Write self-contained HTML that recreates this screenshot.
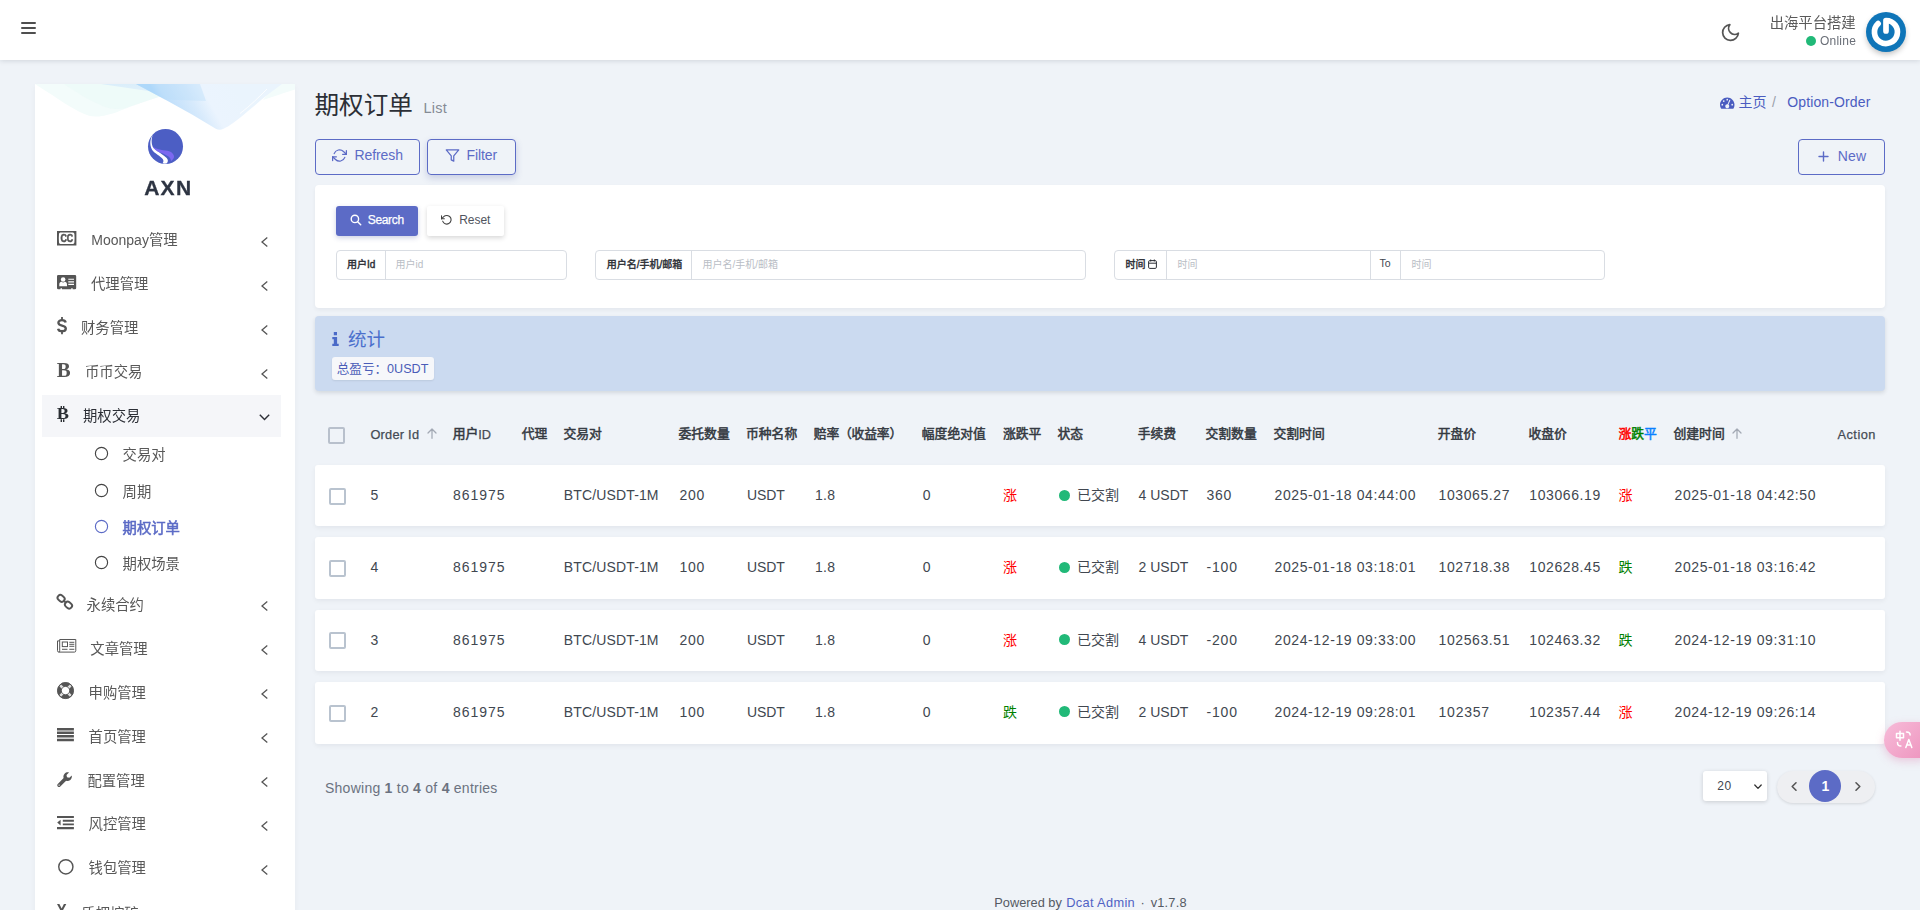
<!DOCTYPE html>
<html lang="zh-CN">
<head>
<meta charset="utf-8">
<title>期权订单</title>
<style>
*{box-sizing:border-box;margin:0;padding:0}
html,body{width:1920px;height:910px;overflow:hidden}
body{background:#eff3f8;font-family:"Liberation Sans","Noto Sans CJK SC",sans-serif;font-size:14px;color:#414750;position:relative}
.abs{position:absolute;white-space:nowrap}
a{text-decoration:none;color:inherit}
#nav{will-change:transform;position:absolute;left:0;top:0;width:1920px;height:60px;background:#fff;box-shadow:0 1px 5px rgba(0,21,41,.13)}
#side{will-change:transform;position:absolute;left:35px;top:84px;width:260px;height:830px;background:#fff;box-shadow:0 2px 6px rgba(0,21,41,.04);overflow:hidden}
.mi{position:absolute;left:0;width:260px;height:44px}
.mi .t{position:absolute;top:.4px;line-height:44px;font-size:14.350px;color:#585858;white-space:nowrap}
.mi svg.ic{position:absolute}
.mi .ar{position:absolute;left:225px;top:16px}
#title{left:314.500px;top:87.900px;font-size:24.600px;line-height:36px;color:#2c2f36}
.btn-o{position:absolute;border:1px solid #5c6bc6;border-radius:3px;color:#5c6bc6;font-size:14px}
.btn-o span{position:absolute;white-space:nowrap;line-height:20px}
.card{position:absolute;background:#fff;border-radius:4px;box-shadow:0 2px 4px rgba(0,21,41,.05)}
.ig{position:absolute;top:250px;height:30px;border:1px solid #d9dde3;border-radius:4px;background:#fff}
.ig .lb{position:absolute;top:0;left:0;height:28px;border-right:1px solid #d9dde3;font-size:10px;-webkit-text-stroke-width:.4px;color:#2c2f36;line-height:28px;white-space:nowrap}
.ig .ph{position:absolute;top:0;line-height:28px;font-size:10px;color:#b9bdc5;white-space:nowrap}
.row{position:absolute;left:315px;width:1570px;height:61.400px;background:#fff;border-radius:3px;box-shadow:0 2px 5px rgba(0,21,41,.055)}
.row span,.hd span{position:absolute;white-space:nowrap;line-height:20px;top:20px;font-size:14px;color:#414750}
.hd{position:absolute;left:315px;width:1570px;top:404px;height:60px}
.hd span{font-size:12.8px;-webkit-text-stroke-width:.5px;color:#353a42}
.hd span i{font-style:normal;position:relative;top:.5px;-webkit-text-stroke-width:.25px;color:#454b55}
.hd span b{font-weight:normal}
.cb{position:absolute;width:17px;height:17px;border:2px solid #b9c3cf;border-radius:2px;background:#fff}
</style>
</head>
<body>
<div id="nav">
<svg class="abs" style="left:20px;top:21px" width="17" height="14" viewBox="0 0 17 14"><path d="M2 2h13M2 7h13M2 12h13" stroke="#4f4f4f" stroke-width="2" stroke-linecap="round" fill="none"/></svg>
<svg class="abs" style="left:1719.75px;top:21.75px" width="21" height="21" viewBox="0 0 24 24"><path d="M21 12.79A9 9 0 1 1 11.21 3 7 7 0 0 0 21 12.79z" fill="none" stroke="#555" stroke-width="2" stroke-linecap="round" stroke-linejoin="round"/></svg>
<div class="abs" style="right:64.300px;top:12.600px;font-size:14.350px;line-height:20px;color:#5a5a5a">出海平台搭建</div>
<div class="abs" style="left:1806px;top:36px;width:10px;height:10px;border-radius:50%;background:#21b978"></div>
<div class="abs" style="left:1820px;top:33px;font-size:12px;line-height:16px;color:#6a6f78;letter-spacing:0.23px">Online</div>
<svg class="abs" style="left:1856px;top:2px;overflow:visible" width="60" height="60" viewBox="-30 -30 60 60"><defs><filter id="avs" x="-50%" y="-50%" width="200%" height="200%"><feGaussianBlur stdDeviation="3"/></filter></defs><circle cx="0" cy="3" r="19" fill="#000" opacity=".28" filter="url(#avs)"/><circle cx="0" cy="0" r="20" fill="#0f75b8"/><path d="M0 -1V-11.5A11.5 11.5 0 1 1 -7.9 -8.4" fill="none" stroke="#fff" stroke-width="5.7" stroke-linecap="round" stroke-linejoin="round"/></svg>
</div>
<div id="side">
<svg class="abs" style="left:0;top:0" width="260" height="60" viewBox="0 0 260 60"><defs>
<linearGradient id="wg2" gradientUnits="userSpaceOnUse" x1="132" y1="32" x2="196" y2="-4"><stop offset="0" stop-color="#a9d5fa"/><stop offset=".1" stop-color="#c0dffb"/><stop offset=".4" stop-color="#d7eafc"/><stop offset=".6" stop-color="#ebf4fe"/><stop offset="1" stop-color="#eaf4fd"/></linearGradient>
<linearGradient id="wg3" x1="0" y1="0" x2="0" y2="1"><stop offset="0" stop-color="#d2e8fb"/><stop offset="1" stop-color="#e9f4fd"/></linearGradient>
</defs>
<path d="M0 0L13.500 8.800C25 16 40 27 54 31.800C60 33.500 68 32.500 81 28.400C95 23 110 17 130 11L150 6V0Z" fill="#f3fcfb"/>
<path d="M29 0C38 6 55 17 67.700 22C75 25 82 26 90 24L130 11V0Z" fill="#e9f9f7" opacity=".5"/>
<path d="M66 0L130 9.500L165 22V0Z" fill="url(#wg3)" opacity=".7"/>
<path d="M228 16L260 5.400V0H240Z" fill="#f3fcfb"/>
<path d="M101 0L130 15.600L157 30.500L180.800 44.700Q184.500 46.600 188.500 44.800C200 39.500 215 25 231.600 11.500L247 0Z" fill="url(#wg2)"/>
<path d="M101 0L165 0L171 17L130 15.600Z" fill="#b9dcfa" opacity=".38"/>
<path d="M205 29.500C215 22 224 13 232 5" fill="none" stroke="#fff" stroke-width="1" opacity=".8"/>
</svg>
<svg class="abs" style="left:113px;top:44.8px;overflow:visible" width="35" height="35" viewBox="-17.5 -17.5 35 35"><circle r="17.5" fill="#4c5ec4"/><path d="M-12.8 -11.5C-16.5 -6 -15.2 0 -13.3 3.5C-11 7 -5 9.5 -2.6 12.8C-1.6 14.5 -2.2 15.8 -3 16.8C-1.5 17.2 0 17.2 1 17C2.6 15.8 2.6 14 2 12.8C0.5 10 -6 6.5 -11.9 1.6C-14 -1.5 -14.5 -6.5 -12.8 -11.5Z" fill="#fff"/><path d="M-13.3 -0.7C-11 2 -7.2 3.2 0.2 4C4 4.4 7.5 6 8.5 9.6C8.8 11.5 7.5 13.5 5.4 14.7C5.4 13 5 12 4 11C2.5 9.3 -2 7 -6.3 5.8C-9 4.5 -11.9 2.5 -13.3 -0.7Z" fill="#7b68f0"/></svg>
<div class="abs" style="left:0;width:260px;text-align:center;top:92px;font-size:21px;line-height:24px;font-weight:bold;color:#2d3442;letter-spacing:1.300px;text-indent:6.500px;-webkit-text-stroke-width:.3px">AXN</div>
<div class="mi " style="top:133.5px;"><span class="t" style="left:56.3px;"><span style="font-size:14px">Moonpay</span>管理</span><svg class="ar" style="left:225.500px;top:19px" width="8" height="10" viewBox="0 0 8 10"><path d="M6.300 .6L1 5l5.300 4.400" fill="none" stroke="#555" stroke-width="1.300"/></svg></div>
<div class="mi " style="top:177.5px;"><span class="t" style="left:56.0px;">代理管理</span><svg class="ar" style="left:225.500px;top:19px" width="8" height="10" viewBox="0 0 8 10"><path d="M6.300 .6L1 5l5.300 4.400" fill="none" stroke="#555" stroke-width="1.300"/></svg></div>
<div class="mi " style="top:221.5px;"><span class="t" style="left:46.0px;">财务管理</span><svg class="ar" style="left:225.500px;top:19px" width="8" height="10" viewBox="0 0 8 10"><path d="M6.300 .6L1 5l5.300 4.400" fill="none" stroke="#555" stroke-width="1.300"/></svg></div>
<div class="mi " style="top:265.5px;"><span class="t" style="left:50.0px;">币币交易</span><svg class="ar" style="left:225.500px;top:19px" width="8" height="10" viewBox="0 0 8 10"><path d="M6.300 .6L1 5l5.300 4.400" fill="none" stroke="#555" stroke-width="1.300"/></svg></div>
<div class="abs" style="left:7.300px;top:311px;width:238.700px;height:42px;background:#f5f6f9"></div>
<div class="mi " style="top:309.5px;"><span class="t" style="left:48.0px;color:#2c2f36">期权交易</span><svg class="ar" style="left:224px;top:20.300px" width="11" height="7" viewBox="0 0 11 7"><path d="M.8 .8L5.500 5.600 10.200 .8" fill="none" stroke="#2c2f36" stroke-width="1.400"/></svg></div>
<div class="mi sub" style="top:351.5px;height:36px"><svg class="ic" style="left:58.5px;top:10.5px" width="15" height="15" viewBox="0 0 15 15"><circle cx="7.5" cy="7.5" r="6.1" fill="none" stroke="#444" stroke-width="1.150"/></svg><span class="t" style="left:87.600px;top:1.300px;line-height:36px;color:#585858;">交易对</span></div>
<div class="mi sub" style="top:388.3px;height:36px"><svg class="ic" style="left:58.5px;top:10.5px" width="15" height="15" viewBox="0 0 15 15"><circle cx="7.5" cy="7.5" r="6.1" fill="none" stroke="#444" stroke-width="1.150"/></svg><span class="t" style="left:87.600px;top:1.300px;line-height:36px;color:#585858;">周期</span></div>
<div class="mi sub" style="top:424.7px;height:36px"><svg class="ic" style="left:58.5px;top:10.5px" width="15" height="15" viewBox="0 0 15 15"><circle cx="7.5" cy="7.5" r="6.1" fill="none" stroke="#5c6bc6" stroke-width="1.150"/></svg><span class="t" style="left:87.600px;top:1.300px;line-height:36px;color:#5c6bc6;-webkit-text-stroke-width:.55px;">期权订单</span></div>
<div class="mi sub" style="top:460.6px;height:36px"><svg class="ic" style="left:58.5px;top:10.5px" width="15" height="15" viewBox="0 0 15 15"><circle cx="7.5" cy="7.5" r="6.1" fill="none" stroke="#444" stroke-width="1.150"/></svg><span class="t" style="left:87.600px;top:1.300px;line-height:36px;color:#585858;">期权场景</span></div>
<div class="mi " style="top:498.3px;"><span class="t" style="left:51.6px;">永续合约</span><svg class="ar" style="left:225.500px;top:19px" width="8" height="10" viewBox="0 0 8 10"><path d="M6.300 .6L1 5l5.300 4.400" fill="none" stroke="#555" stroke-width="1.300"/></svg></div>
<div class="mi " style="top:542.3px;"><span class="t" style="left:55.3px;">文章管理</span><svg class="ar" style="left:225.500px;top:19px" width="8" height="10" viewBox="0 0 8 10"><path d="M6.300 .6L1 5l5.300 4.400" fill="none" stroke="#555" stroke-width="1.300"/></svg></div>
<div class="mi " style="top:586.3px;"><span class="t" style="left:53.6px;">申购管理</span><svg class="ar" style="left:225.500px;top:19px" width="8" height="10" viewBox="0 0 8 10"><path d="M6.300 .6L1 5l5.300 4.400" fill="none" stroke="#555" stroke-width="1.300"/></svg></div>
<div class="mi " style="top:630.3px;"><span class="t" style="left:53.6px;">首页管理</span><svg class="ar" style="left:225.500px;top:19px" width="8" height="10" viewBox="0 0 8 10"><path d="M6.300 .6L1 5l5.300 4.400" fill="none" stroke="#555" stroke-width="1.300"/></svg></div>
<div class="mi " style="top:674.3px;"><span class="t" style="left:52.4px;">配置管理</span><svg class="ar" style="left:225.500px;top:19px" width="8" height="10" viewBox="0 0 8 10"><path d="M6.300 .6L1 5l5.300 4.400" fill="none" stroke="#555" stroke-width="1.300"/></svg></div>
<div class="mi " style="top:718.1px;"><span class="t" style="left:53.6px;">风控管理</span><svg class="ar" style="left:225.500px;top:19px" width="8" height="10" viewBox="0 0 8 10"><path d="M6.300 .6L1 5l5.300 4.400" fill="none" stroke="#555" stroke-width="1.300"/></svg></div>
<div class="mi " style="top:762.0px;"><span class="t" style="left:53.6px;">钱包管理</span><svg class="ar" style="left:225.500px;top:19px" width="8" height="10" viewBox="0 0 8 10"><path d="M6.300 .6L1 5l5.300 4.400" fill="none" stroke="#555" stroke-width="1.300"/></svg></div>
<div class="mi " style="top:807.3px;"><span class="t" style="left:46.3px;">质押挖矿</span></div>
<svg class="abs" style="left:22.05px;top:146.55px;overflow:visible" width="19.4" height="14.5" viewBox="0 0 19.4 14.5" ><rect width="19.4" height="14.5" fill="#555"/><path d="M3.400 1.600Q9.700 1.200 16 1.600Q17.300 1.700 17.400 3Q17.800 7.250 17.400 11.500Q17.300 12.800 16 12.900Q9.700 13.300 3.400 12.900Q2.100 12.800 2 11.500Q1.600 7.250 2 3Q2.100 1.700 3.400 1.600Z" fill="#fff"/><text transform="translate(9.800 11.300) scale(.76 1)" text-anchor="middle" style="font-family:Liberation Sans,sans-serif;font-weight:bold;font-size:11.6px;letter-spacing:-.1px" fill="#555" stroke="#555" stroke-width=".55">CC</text></svg>
<svg class="abs" style="left:22.00px;top:190.70px;overflow:visible" width="19.2" height="14.3" viewBox="0 0 19.2 14.3" ><path d="M1.200 0h16.800a1.200 1.200 0 0 1 1.200 1.200v11.900a1.200 1.200 0 0 1-1.200 1.200h-2.300v-1h-1.500v1H5v-1H3.500v1H1.200A1.200 1.200 0 0 1 0 13.100V1.200A1.200 1.200 0 0 1 1.200 0z" fill="#555"/><circle cx="6.150" cy="4.500" r="2.300" fill="#fff"/><path d="M2.300 11.300V9.400c0-1.600 1-2.600 2.200-2.600.5.500 1 .700 1.650.700s1.150-.2 1.650-.700c1.200 0 2.200 1 2.200 2.600v1.900z" fill="#fff"/><path d="M11.300 4.300H17M11.300 6.900H17M11.300 9.400H17" stroke="#fff" stroke-width="1.100"/></svg>
<svg class="abs" style="left:21.70px;top:233.10px;overflow:visible" width="10" height="17.2" viewBox="0 0 10 17.2" ><path d="M8.700 5.500C8.300 3.900 6.900 3.100 5 3.100C2.900 3.100 1.400 4.200 1.400 5.800C1.400 7.500 2.800 8.100 5 8.600C7.300 9.100 8.800 9.800 8.800 11.600C8.800 13.300 7.200 14.300 5 14.300C2.900 14.300 1.500 13.400 1.100 11.700" fill="none" stroke="#555" stroke-width="2.350"/><path d="M5 0v3M5 14.300v2.900" stroke="#555" stroke-width="1.800"/></svg>
<div class="abs" style="left:21.799999999999997px;top:273.5px;font-family:'Liberation Serif',serif;font-size:20.8px;line-height:24px;font-weight:bold;color:#555">B</div>
<svg class="abs" style="left:22.10px;top:322.40px;overflow:visible" width="12.2" height="15.9" viewBox="0 0 12.2 15.9" ><text transform="translate(-.2 13.400) scale(1.09 1)" style="font-family:Liberation Serif,serif;font-weight:bold;font-size:16.8px" fill="#2a2e33">B</text><path d="M3.600 0v2.700h1.400V0zM6 0v2.700h1.400V0zM3.600 13.200v2.700h1.400v-2.700zM6 13.200v2.700h1.400v-2.700z" fill="#2a2e33"/></svg>
<svg class="abs" style="left:22.10px;top:510.30px;overflow:visible" width="15.8" height="15.7" viewBox="0 0 15.8 15.7" ><g fill="none" stroke="#555" stroke-width="1.900"><rect x="-3.700" y="-2.800" width="7.400" height="5.600" rx="2.600" transform="translate(4.100 4.400) rotate(40)"/><rect x="-3.700" y="-2.800" width="7.400" height="5.600" rx="2.600" transform="translate(11.500 11.200) rotate(40)"/></g><path d="M6.300 6.200l3 2.900" stroke="#555" stroke-width="1.900"/></svg>
<svg class="abs" style="left:22.10px;top:555.30px;overflow:visible" width="19.3" height="13.6" viewBox="0 0 19.3 13.6" ><g fill="none" stroke="#555" stroke-width="1"><path d="M2.700 .5h16.100v11.200a1.400 1.400 0 0 1-1.400 1.400H1.900A1.400 1.400 0 0 1 .5 11.700V1.900h2.200"/><path d="M2.700 .5v11.300a1 1 0 0 1-1 1.200"/><rect x="5.300" y="3" width="5.200" height="4.600"/><path d="M12.300 3.300h5M12.300 5.300h5M12.300 7.300h5M5 10.300h5.500M12.300 10.300h5"/></g></svg>
<svg class="abs" style="left:22.10px;top:598.10px;overflow:visible" width="17" height="17.2" viewBox="0 0 17 17.2" ><circle cx="8.500" cy="8.600" r="6.150" fill="none" stroke="#555" stroke-width="4.200"/><g stroke="#fff" stroke-width="2.600" opacity=".8"><path d="M6.400 6.500L3.200 3.300M10.600 6.500l3.200-3.200M6.400 10.700l-3.200 3.200M10.600 10.700l3.200 3.200"/></g><circle cx="8.500" cy="8.600" r="8" fill="none" stroke="#555" stroke-width="1"/><circle cx="8.500" cy="8.600" r="4.200" fill="none" stroke="#555" stroke-width=".9"/></svg>
<svg class="abs" style="left:22.10px;top:643.80px;overflow:visible" width="16.9" height="13.1" viewBox="0 0 16.9 13.1" ><path d="M0 0h16.900v2.500H0zM0 3.550h16.900v2.500H0zM0 7.100h16.900v2.500H0zM0 10.650h16.900v2.500H0z" fill="#555"/></svg>
<svg class="abs" style="left:22.10px;top:687.90px;overflow:visible" width="15.8" height="15" viewBox="0 0 15.8 15" ><path d="M14.800 3.600c.3 1.700-.3 3.300-1.500 4.300-1.200 1-2.700 1.300-4.200.8L3.300 14.400c-.7.700-1.800.7-2.500 0s-.7-1.800 0-2.500l5.800-5.800c-.5-1.500-.1-3.100 1-4.300C8.700.6 10.400.1 12 .5L9.500 3l.5 2.300 2.300.5z" fill="#555"/><circle cx="2.100" cy="13.100" r=".7" fill="#fff"/></svg>
<svg class="abs" style="left:22.10px;top:731.70px;overflow:visible" width="16.9" height="13.2" viewBox="0 0 16.9 13.2" ><path d="M0 0h16.900v2.100H0zM5.800 3.800h11.100v1.900H5.800zM5.800 7.400h11.100v1.900H5.800zM0 11.100h16.900v2.100H0zM3.600 3.700v5.700L.2 6.550z" fill="#555"/></svg>
<svg class="abs" style="left:22.50px;top:774.70px;overflow:visible" width="15.7" height="15.7" viewBox="0 0 15.7 15.7" ><circle cx="7.850" cy="7.850" r="7.100" fill="none" stroke="#555" stroke-width="1.450"/></svg>
<svg class="abs" style="left:22.10px;top:819.90px;overflow:visible" width="9.3" height="12" viewBox="0 0 9.3 12" ><path d="M0 0h2.400l2.250 4.500L6.900 0h2.400L5.800 6.500v5.500H3.500V6.500z" fill="#555"/></svg>
</div>
<div id="title" class="abs">期权订单</div>
<div class="abs" style="left:423.5px;top:98px;font-size:14.5px;line-height:20px;color:#858b95;letter-spacing:0.25px">List</div>
<svg class="abs" style="left:1720.4px;top:96.5px" width="14.5" height="12" viewBox="0 0 29 24"><path d="M14.5 1C6.5 1 0 7.5 0 15.5c0 2.6.7 5.1 2 7.3.3.6 1 .9 1.600.9h21.800c.7 0 1.300-.3 1.600-.9 1.300-2.200 2-4.700 2-7.300C29 7.500 22.500 1 14.500 1z" fill="#4a5cc0"/><circle cx="14.500" cy="5.300" r="1.700" fill="#eff3f8"/><circle cx="7.500" cy="8.200" r="1.700" fill="#eff3f8"/><circle cx="4.600" cy="15.300" r="1.700" fill="#eff3f8"/><circle cx="24.400" cy="15.300" r="1.700" fill="#eff3f8"/><path d="M20.500 6.800l-3.600 8.300c1 .8 1.600 2 1.600 3.300 0 2.300-1.800 4.100-4 4.100s-4-1.800-4-4.100 1.800-4.100 4-4.100c.2 0 .4 0 .6.100l3.500-8.300c.3-.7 1-1 1.600-.7.400.300.600 1 .300 1.400z" fill="#eff3f8"/></svg>
<div class="abs" style="left:1738.5px;top:92px;font-size:14px;line-height:20px;color:#4a5cc0">主页</div>
<div class="abs" style="left:1772px;top:92px;font-size:14px;line-height:20px;color:#9aa0aa">/</div>
<div class="abs" style="left:1787.3px;top:92px;font-size:14px;line-height:20px;color:#4a5cc0;letter-spacing:.12px">Option-Order</div>
<div class="btn-o" style="left:315px;top:139px;width:105px;height:36px;border-radius:4px"><svg style="position:absolute;left:16.3px;top:7.6px" width="15" height="15" viewBox="0 0 24 24" fill="none" stroke="#5c6bc6" stroke-width="2" stroke-linecap="round" stroke-linejoin="round"><polyline points="23 4 23 10 17 10"/><polyline points="1 20 1 14 7 14"/><path d="M3.51 9a9 9 0 0 1 14.85-3.36L23 10M1 14l4.64 4.36A9 9 0 0 0 20.49 15"/></svg><span style="left:38.5px;top:4.8px;letter-spacing:-.1px">Refresh</span></div>
<div class="btn-o" style="left:427px;top:139px;width:89px;height:36px;border-radius:4px;box-shadow:0 3px 7px rgba(60,75,150,.22)"><svg style="position:absolute;left:16.6px;top:7.6px" width="15" height="15" viewBox="0 0 24 24" fill="none" stroke="#5c6bc6" stroke-width="2" stroke-linecap="round" stroke-linejoin="round"><polygon points="22 3 2 3 10 12.46 10 19 14 21 14 12.46 22 3"/></svg><span style="left:38.4px;top:4.8px;letter-spacing:-.05px">Filter</span></div>
<div class="btn-o" style="left:1798px;top:139px;width:87px;height:36px;border-radius:4px"><svg style="position:absolute;left:19px;top:11px" width="11" height="11" viewBox="0 0 11 11"><path d="M5.500 1v9M1 5.500h9" stroke="#5c6bc6" stroke-width="1.400" stroke-linecap="round"/></svg><span style="left:38.8px;top:6.300px;letter-spacing:.15px">New</span></div>
<div class="card" style="left:315px;top:185px;width:1570px;height:123px"></div>
<div class="abs" style="left:336px;top:206px;width:82px;height:30px;background:#5c6bc6;border-radius:3px;box-shadow:0 2px 5px rgba(60,75,150,.25)"><svg style="position:absolute;left:14px;top:8px" width="12" height="12" viewBox="0 0 13 13"><circle cx="5.300" cy="5.300" r="4" fill="none" stroke="#fff" stroke-width="1.500"/><path d="M8.300 8.300l3.300 3.300" stroke="#fff" stroke-width="1.600" stroke-linecap="round"/></svg><span class="abs" style="left:31.800px;top:6px;font-size:12px;line-height:16px;color:#fff;letter-spacing:-.35px;-webkit-text-stroke-width:.25px">Search</span></div>
<div class="abs" style="left:427px;top:206px;width:77px;height:30px;background:#fff;border-radius:2px;box-shadow:0 2px 5px rgba(0,0,0,.16)"><svg style="position:absolute;left:14px;top:8.300px" width="11.500" height="11.500" viewBox="0 0 24 24" fill="none" stroke="#444" stroke-width="2.300" stroke-linecap="round" stroke-linejoin="round"><polyline points="1 4 1 10 7 10"/><path d="M3.510 15a9 9 0 1 0 2.130-9.360L1 10"/></svg><span class="abs" style="left:32.2px;top:6px;font-size:12px;line-height:16px;color:#50555e;letter-spacing:-0.05px">Reset</span></div>
<div class="ig" style="left:336px;width:231px"><div class="lb" style="width:48.500px;padding-left:10px">用户Id</div><div class="ph" style="left:58.500px">用户id</div></div>
<div class="ig" style="left:595.4px;width:490.6px"><div class="lb" style="width:95.500px;padding-left:10.300px">用户名/手机/邮箱</div><div class="ph" style="left:106px">用户名/手机/邮箱</div></div>
<div class="ig" style="left:1114px;width:491px"><div class="lb" style="width:52.3px;padding-left:10.5px">时间</div>
<svg style="position:absolute;left:33px;top:8.300px" width="9" height="10" viewBox="0 0 9 10"><rect x=".6" y="1.600" width="7.800" height="7.800" rx="1.200" fill="none" stroke="#2c2f36" stroke-width="1"/><path d="M.6 4.200h7.800M2.700.5v2M6.300.5v2" stroke="#2c2f36" stroke-width="1" fill="none"/></svg>
<div class="ph" style="left:62.5px">时间</div>
<div class="abs" style="left:254.5px;top:0;width:31px;height:28px;border-left:1px solid #d9dde3;border-right:1px solid #d9dde3;font-size:10.5px;line-height:24px;text-align:center;color:#414750">To</div>
<div class="ph" style="left:296.5px">时间</div></div>
<div class="abs" style="left:315px;top:316px;width:1570px;height:75px;background:#cbdaf0;border-radius:4px;box-shadow:0 2px 4px rgba(0,21,41,.12)"></div>
<svg class="abs" style="left:332px;top:332px" width="7" height="14" viewBox="0 0 7 14"><path d="M1.800 0h3.200v3.200H1.800zM.3 5h4.800v6.800h1.600V14H.3v-2.200h1.500V7.200H.3z" fill="#4a6ac8"/></svg>
<div class="abs" style="left:348px;top:327px;font-size:18.500px;line-height:26px;color:#4a6fcc">统计</div>
<div class="abs" style="left:332px;top:357px;width:102px;height:23px;background:#f6f7fa;border-radius:3px;box-shadow:0 1px 2px rgba(0,0,0,.08)"><span class="abs" style="left:4.7px;top:2.5px;font-size:12.6px;line-height:18px;color:#4a5cb8">总盈亏：0USDT</span></div>
<div class="hd"><div class="cb" style="left:13px;top:22.5px;border-color:#b8c0cc;background:transparent"></div><span style="left:55.4px;"><i style="letter-spacing:0.24px">Order Id</i><svg style="position:absolute;top:4.200px;left:56.5px" width="10" height="11" viewBox="0 0 10 11"><path d="M5 10.300V1.200M1 5L5 1l4 4" fill="none" stroke="#a3a9b4" stroke-width="1.250" stroke-linecap="round" stroke-linejoin="round"/></svg></span><span style="left:137.7px;">用户<i>ID</i></span><span style="left:206.7px;">代理</span><span style="left:248.5px;">交易对</span><span style="left:363.5px;">委托数量</span><span style="left:431.0px;">币种名称</span><span style="left:498.8px;letter-spacing:-.2px">赔率（收益率）</span><span style="left:606.8px;">幅度绝对值</span><span style="left:688.0px;">涨跌平</span><span style="left:742.5px;">状态</span><span style="left:822.7px;">手续费</span><span style="left:890.5px;">交割数量</span><span style="left:958.5px;">交割时间</span><span style="left:1122.7px;">开盘价</span><span style="left:1213.4px;">收盘价</span><span style="left:1303.5px;"><b style="color:#ff0000">涨</b><b style="color:#008000">跌</b><b style="color:#0a80ff">平</b></span><span style="left:1358.5px;">创建时间<svg style="position:absolute;top:4.200px;left:58.7px" width="10" height="11" viewBox="0 0 10 11"><path d="M5 10.300V1.200M1 5L5 1l4 4" fill="none" stroke="#a3a9b4" stroke-width="1.250" stroke-linecap="round" stroke-linejoin="round"/></svg></span><span style="left:1522.5px;"><i style="letter-spacing:0.47px">Action</i></span></div>
<div class="row" style="top:465px;height:61.4px"><div class="cb" style="left:14px;top:22.700px"></div><span style="left:55.4px;letter-spacing:0.74px;">5</span><span style="left:138.1px;letter-spacing:.97px">861975</span><span style="left:248.5px;letter-spacing:0.14px;margin-left:.3px;word-spacing:0">BTC/USDT-1M</span><span style="left:363.5px;letter-spacing:0.74px;margin-left:.9px">200</span><span style="left:431.0px;letter-spacing:-0.14px;margin-left:1.1px">USDT</span><span style="left:498.8px;letter-spacing:0.28px;margin-left:1.1px">1.8</span><span style="left:606.8px;letter-spacing:0.74px;margin-left:.9px">0</span><span style="left:688.0px;color:#ff0000">涨</span><span style="left:743.5px;top:24.5px;width:11px;height:11px;border-radius:50%;background:#21b978"></span><span style="left:762.0px">已交割</span><span style="left:822.7px;letter-spacing:-0.01px;margin-left:.9px">4 USDT</span><span style="left:890.5px;letter-spacing:0.74px;margin-left:.9px">360</span><span style="left:959.5px;letter-spacing:0.61px;">2025-01-18 04:44:00</span><span style="left:1123.6px;letter-spacing:0.59px;">103065.27</span><span style="left:1214.3px;letter-spacing:0.59px;">103066.19</span><span style="left:1303.5px;color:#ff0000">涨</span><span style="left:1359.5px;letter-spacing:0.61px;">2025-01-18 04:42:50</span></div>
<div class="row" style="top:537.3px;height:61.4px"><div class="cb" style="left:14px;top:22.700px"></div><span style="left:55.4px;letter-spacing:0.74px;">4</span><span style="left:138.1px;letter-spacing:.97px">861975</span><span style="left:248.5px;letter-spacing:0.14px;margin-left:.3px;word-spacing:0">BTC/USDT-1M</span><span style="left:363.5px;letter-spacing:0.74px;margin-left:.9px">100</span><span style="left:431.0px;letter-spacing:-0.14px;margin-left:1.1px">USDT</span><span style="left:498.8px;letter-spacing:0.28px;margin-left:1.1px">1.8</span><span style="left:606.8px;letter-spacing:0.74px;margin-left:.9px">0</span><span style="left:688.0px;color:#ff0000">涨</span><span style="left:743.5px;top:24.5px;width:11px;height:11px;border-radius:50%;background:#21b978"></span><span style="left:762.0px">已交割</span><span style="left:822.7px;letter-spacing:-0.01px;margin-left:.9px">2 USDT</span><span style="left:890.5px;letter-spacing:0.89px;margin-left:.9px">-100</span><span style="left:959.5px;letter-spacing:0.61px;">2025-01-18 03:18:01</span><span style="left:1123.6px;letter-spacing:0.59px;">102718.38</span><span style="left:1214.3px;letter-spacing:0.59px;">102628.45</span><span style="left:1303.5px;color:#008000">跌</span><span style="left:1359.5px;letter-spacing:0.61px;">2025-01-18 03:16:42</span></div>
<div class="row" style="top:609.6px;height:61.4px"><div class="cb" style="left:14px;top:22.700px"></div><span style="left:55.4px;letter-spacing:0.74px;">3</span><span style="left:138.1px;letter-spacing:.97px">861975</span><span style="left:248.5px;letter-spacing:0.14px;margin-left:.3px;word-spacing:0">BTC/USDT-1M</span><span style="left:363.5px;letter-spacing:0.74px;margin-left:.9px">200</span><span style="left:431.0px;letter-spacing:-0.14px;margin-left:1.1px">USDT</span><span style="left:498.8px;letter-spacing:0.28px;margin-left:1.1px">1.8</span><span style="left:606.8px;letter-spacing:0.74px;margin-left:.9px">0</span><span style="left:688.0px;color:#ff0000">涨</span><span style="left:743.5px;top:24.5px;width:11px;height:11px;border-radius:50%;background:#21b978"></span><span style="left:762.0px">已交割</span><span style="left:822.7px;letter-spacing:-0.01px;margin-left:.9px">4 USDT</span><span style="left:890.5px;letter-spacing:0.89px;margin-left:.9px">-200</span><span style="left:959.5px;letter-spacing:0.61px;">2024-12-19 09:33:00</span><span style="left:1123.6px;letter-spacing:0.59px;">102563.51</span><span style="left:1214.3px;letter-spacing:0.59px;">102463.32</span><span style="left:1303.5px;color:#008000">跌</span><span style="left:1359.5px;letter-spacing:0.61px;">2024-12-19 09:31:10</span></div>
<div class="row" style="top:681.9px;height:62.2px"><div class="cb" style="left:14px;top:22.700px"></div><span style="left:55.4px;letter-spacing:0.74px;">2</span><span style="left:138.1px;letter-spacing:.97px">861975</span><span style="left:248.5px;letter-spacing:0.14px;margin-left:.3px;word-spacing:0">BTC/USDT-1M</span><span style="left:363.5px;letter-spacing:0.74px;margin-left:.9px">100</span><span style="left:431.0px;letter-spacing:-0.14px;margin-left:1.1px">USDT</span><span style="left:498.8px;letter-spacing:0.28px;margin-left:1.1px">1.8</span><span style="left:606.8px;letter-spacing:0.74px;margin-left:.9px">0</span><span style="left:688.0px;color:#008000">跌</span><span style="left:743.5px;top:24.5px;width:11px;height:11px;border-radius:50%;background:#21b978"></span><span style="left:762.0px">已交割</span><span style="left:822.7px;letter-spacing:-0.01px;margin-left:.9px">2 USDT</span><span style="left:890.5px;letter-spacing:0.89px;margin-left:.9px">-100</span><span style="left:959.5px;letter-spacing:0.61px;">2024-12-19 09:28:01</span><span style="left:1123.6px;letter-spacing:0.74px;">102357</span><span style="left:1214.3px;letter-spacing:0.59px;">102357.44</span><span style="left:1303.5px;color:#ff0000">涨</span><span style="left:1359.5px;letter-spacing:0.61px;">2024-12-19 09:26:14</span></div>
<div class="abs" style="left:325px;top:777.5px;font-size:14px;line-height:20px;color:#6b7280;letter-spacing:0.25px">Showing <b>1</b> to <b>4</b> of <b>4</b> entries</div>
<div class="abs" style="left:1703px;top:771px;width:64px;height:30px;background:#fff;border-radius:3px;box-shadow:0 1px 4px rgba(0,0,0,.16)"><span class="abs" style="left:14.3px;top:7px;font-size:12px;line-height:16px;color:#414750;letter-spacing:0.63px">20</span><svg style="position:absolute;left:50.5px;top:13px" width="8" height="6" viewBox="0 0 8 6"><path d="M.8 1l3.200 3.400L7.200 1" fill="none" stroke="#333" stroke-width="1.300" stroke-linecap="round" stroke-linejoin="round"/></svg></div>
<div class="abs" style="left:1777px;top:771px;width:97.800px;height:32px;background:#eeeff2;border-radius:16px;box-shadow:0 1px 3px rgba(0,0,0,.12)"></div>
<svg class="abs" style="left:1790px;top:781px" width="8" height="11" viewBox="0 0 8 11"><path d="M6 1.800L2.200 5.500 6 9.200" fill="none" stroke="#555" stroke-width="1.600" stroke-linecap="round" stroke-linejoin="round"/></svg>
<svg class="abs" style="left:1853.5px;top:781px" width="8" height="11" viewBox="0 0 8 11"><path d="M2 1.800L5.800 5.500 2 9.200" fill="none" stroke="#555" stroke-width="1.600" stroke-linecap="round" stroke-linejoin="round"/></svg>
<div class="abs" style="left:1809.4px;top:770.2px;width:32px;height:32px;border-radius:50%;background:#5c6bc6;color:#fff;font-weight:bold;font-size:14px;line-height:32px;text-align:center">1</div>
<div class="abs" style="left:994.3px;top:894px;font-size:12.8px;line-height:18px;color:#555a63">Powered by</div>
<div class="abs" style="left:1066.2px;top:894px;font-size:12.8px;line-height:18px;color:#5062c4;letter-spacing:0.34px">Dcat Admin</div>
<div class="abs" style="left:1140.5px;top:894px;font-size:12.8px;line-height:18px;color:#555a63">·</div>
<div class="abs" style="left:1150.7px;top:894px;font-size:12.8px;line-height:18px;color:#555a63;letter-spacing:0.19px">v1.7.8</div>
<div class="abs" style="left:1884px;top:721.8px;width:40px;height:36px;border-radius:18px 0 0 18px;background:linear-gradient(135deg,#f7bcd9,#ee96bf);box-shadow:0 3px 8px rgba(220,120,170,.35)"></div>
<svg class="abs" style="left:1895px;top:730px" width="19" height="19" viewBox="0 0 19 19" fill="none" stroke="#fff" stroke-width="1.500" stroke-linecap="round" stroke-linejoin="round"><path d="M1.500 3.500h7v4.300h-7zM5 1.200v9"/><path d="M10.800 17.500l3-8 3 8M11.800 15h4"/><path d="M11.500 2c2.200 0 3.600 1 3.600 3"/><path d="M2.500 12.500c0 2.200 1.200 3.600 3.400 3.600"/></svg>
</body>
</html>
